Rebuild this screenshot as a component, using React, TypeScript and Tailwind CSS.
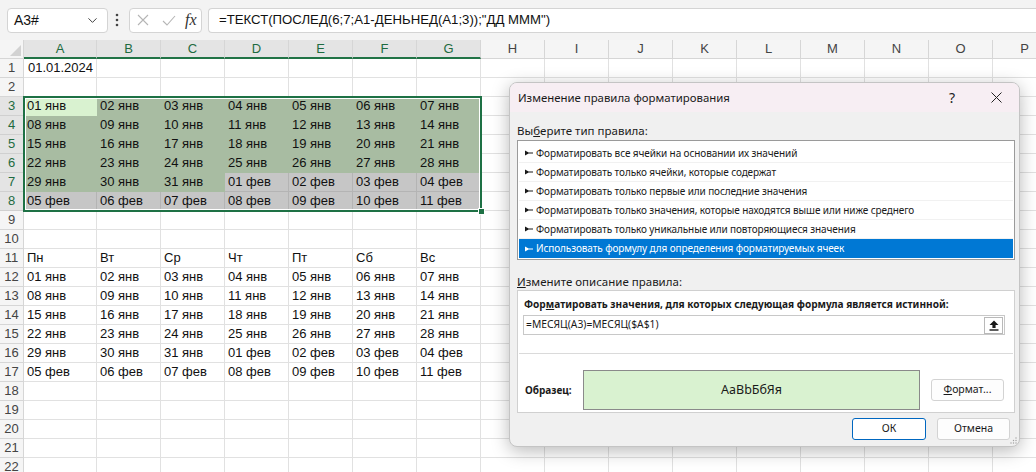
import { ChevronDown } from 'lucide-react';

const COLS = ['A', 'B', 'C', 'D', 'E', 'F', 'G', 'H', 'I', 'J', 'K', 'L', 'M', 'N', 'O', 'P'];
const WEEK = ['Пн', 'Вт', 'Ср', 'Чт', 'Пт', 'Сб', 'Вс'];
const DAYS = Array.from({ length: 42 }, (_, i) =>
    i < 31 ? `${String(i + 1).padStart(2, '0')} янв` : `${String(i - 30).padStart(2, '0')} фев`
);
const ROWS = Array.from({ length: 22 }, (_, i) => i + 1);

const RULES = [
    'Форматировать все ячейки на основании их значений',
    'Форматировать только ячейки, которые содержат',
    'Форматировать только первые или последние значения',
    'Форматировать только значения, которые находятся выше или ниже среднего',
    'Форматировать только уникальные или повторяющиеся значения',
    'Использовать формулу для определения форматируемых ячеек',
];

const cellText = (row: number, col: number) => {
    if (row === 1 && col === 0) return '01.01.2024';
    if (col > 6) return '';
    if (row >= 3 && row <= 8) return DAYS[(row - 3) * 7 + col];
    if (row === 11) return WEEK[col];
    if (row >= 12 && row <= 17) return DAYS[(row - 12) * 7 + col];
    return '';
};

// заливка: условное форматирование + затемнение выделения
const cellTone = (row: number, col: number) => {
    if (row < 3 || row > 8 || col > 6) return 'border-[#e1e1e1] bg-white';
    const i = (row - 3) * 7 + col;
    if (i === 0) return 'border-[#d9f2d0] bg-[#d9f2d0]';
    if (i < 31) return 'border-[#a8bca2] bg-[#a8bca2]';
    return 'border-[#b4b4b4] bg-[#c6c6c6]';
};

function Arrow({ white }: { white?: boolean }) {
    return (
        <svg width="8" height="6" viewBox="0 0 8 6" className="flex-none">
            <path d="M0 0.5 L3.6 2.6 H8 V3.4 H3.6 L0 5.5 Z" fill={white ? '#ffffff' : '#1a1a1a'} />
        </svg>
    );
}

export default function App() {
    return (
        <div className="relative h-[472px] w-[1036px] overflow-hidden bg-white font-['Liberation_Sans',Arial,sans-serif] text-[#111]">
            {/* Строка формул */}
            <div className="flex h-[40px] items-center bg-[#f3f3f3] pl-[7px]">
                <div className="flex h-[25px] w-[101px] flex-none items-center justify-between rounded-[4px] border border-[#d4d4d4] bg-white pl-[6px] pr-[7px] text-[14px]">
                    <span>A3#</span>
                    <ChevronDown size={15} strokeWidth={1.5} className="text-[#333]" />
                </div>
                <svg width="4" height="14" viewBox="0 0 4 14" className="ml-[7px] flex-none">
                    <circle cx="2" cy="2" r="1.3" fill="#444" />
                    <circle cx="2" cy="7" r="1.3" fill="#444" />
                    <circle cx="2" cy="12" r="1.3" fill="#444" />
                </svg>
                <div className="ml-[10px] flex h-[25px] w-[73px] flex-none items-center rounded-[4px] border border-[#d4d4d4] bg-white">
                    <svg width="12" height="12" viewBox="0 0 12 12" className="ml-[7px]">
                        <path d="M1 1 L11 11 M11 1 L1 11" stroke="#b5b5b5" strokeWidth="1.1" />
                    </svg>
                    <svg width="14" height="11" viewBox="0 0 14 11" className="ml-[13px]">
                        <path d="M1 6 L5 10 L13 1" stroke="#b5b5b5" strokeWidth="1.1" fill="none" />
                    </svg>
                    <span className="ml-[9px] font-['Liberation_Serif',serif] text-[16px] italic text-[#333]">fx</span>
                </div>
                <div className="ml-[6px] flex h-[25px] flex-1 items-center rounded-l-[4px] border border-r-0 border-[#d4d4d4] bg-white pl-[10px] text-[13.2px]">
                    =ТЕКСТ(ПОСЛЕД(6;7;A1-ДЕНЬНЕД(A1;3));"ДД МММ")
                </div>
            </div>

            {/* Лист */}
            <div className="relative">
                <div className="flex h-[19px]">
                    <div className="flex w-[24px] flex-none items-end justify-end border-b border-r border-[#d6d6d6] bg-[#f5f5f5] pb-[2px] pr-[2px]">
                        <svg width="11" height="11" viewBox="0 0 11 11">
                            <path d="M11 0 V11 H0 Z" fill="#d2d2d2" />
                        </svg>
                    </div>
                    {COLS.map((c, i) => (
                        <div
                            key={c}
                            className={`flex flex-none items-center justify-center border-r text-[13px] ${i === 0 ? 'w-[73px]' : 'w-[64px]'} ${
                                i < 7
                                    ? 'border-b-2 border-r-[#d6d6d6] border-b-[#217346] bg-[#e4e4e4] text-[#1e6b41]'
                                    : 'border-b border-[#d6d6d6] bg-[#f5f5f5] text-[#444]'
                            }`}
                        >
                            {c}
                        </div>
                    ))}
                </div>
                {ROWS.map(r => {
                    const sel = r >= 3 && r <= 8;
                    return (
                        <div key={r} className="flex h-[19px]">
                            <div
                                className={`flex w-[24px] flex-none items-center justify-center border-b border-r text-[13px] ${
                                    sel ? 'border-b-[#d0d0d0] border-r-[#217346] bg-[#e4e4e4] text-[#1e6b41]' : 'border-[#d6d6d6] bg-[#f5f5f5] text-[#444]'
                                }`}
                            >
                                {r}
                            </div>
                            {COLS.map((c, i) => (
                                <div
                                    key={c}
                                    className={`flex-none overflow-visible whitespace-nowrap border-b border-r text-[13px] leading-[18px] ${
                                        i === 0 ? 'w-[73px]' : 'w-[64px]'
                                    } ${r === 1 && i === 0 ? 'pr-[3px] text-right' : 'pl-[3px]'} ${cellTone(r, i)}`}
                                >
                                    {cellText(r, i)}
                                </div>
                            ))}
                        </div>
                    );
                })}

                {/* Рамка выделения A3:G8 */}
                <div className="absolute left-[23px] top-[56px] h-[116px] w-[459px] border-2 border-[#1e7145] shadow-[inset_0_0_0_1px_#ffffff]">
                    <div className="absolute -bottom-[5px] -right-[5px] h-[7px] w-[7px] border border-white bg-[#1e7145]" />
                </div>
            </div>

            {/* Диалог */}
            <div className="absolute left-[509px] top-[82px] flex h-[365px] w-[511px] flex-col overflow-hidden rounded-[8px] border border-[#c4c4c4] bg-[#f0f0f0] font-['Noto_Sans',sans-serif] text-[#1a1a1a] shadow-[0_4px_18px_rgba(0,0,0,0.28)]">
                <div className="flex h-[29px] flex-none items-center bg-[#f7eef3] pl-[8px]">
                    <span className="text-[11.4px]">Изменение правила форматирования</span>
                    <span className="ml-auto text-[14px] text-[#222]">?</span>
                    <svg width="11" height="11" viewBox="0 0 11 11" className="ml-[36px] mr-[17px]">
                        <path d="M0.5 0.5 L10.5 10.5 M10.5 0.5 L0.5 10.5" stroke="#222" strokeWidth="1" />
                    </svg>
                </div>

                <div className="ml-[7px] mt-[12px] h-[14px] text-[11.5px] leading-[14px]">
                    Вы<span className="underline">б</span>ерите тип правила:
                </div>
                <div className="ml-[7px] mt-[2px] h-[120px] w-[498px] border border-[#9a9a9a] bg-white pt-[3px]">
                    {RULES.map((t, i) => {
                        const active = i === RULES.length - 1;
                        return (
                            <div
                                key={t}
                                className={`mx-[1px] flex h-[19px] items-center gap-[3px] pl-[6px] text-[10px] tracking-[-0.1px] ${
                                    active ? 'bg-[#0078d4] text-white' : 'border-b border-[#f1f1f1]'
                                }`}
                            >
                                <Arrow white={active} />
                                <span>{t}</span>
                            </div>
                        );
                    })}
                </div>

                <div className="ml-[7px] mt-[15px] h-[14px] text-[11.5px] leading-[14px]">
                    <span className="underline">И</span>змените описание правила:
                </div>
                <div className="ml-[7px] mt-[1px] flex h-[123px] w-[498px] flex-col border border-[#d0d0d0] bg-white">
                    <div className="ml-[6px] mt-[6px] h-[15px] text-[10.1px] font-bold leading-[15px]">
                        Фор<span className="underline">м</span>атировать значения, для которых следующая формула является истинной:
                    </div>
                    <div className="ml-[5px] mt-[3px] flex h-[20px] w-[482px] items-center border border-[#c8c8c8] bg-white pl-[2px] text-[10.3px]">
                        <span>=МЕСЯЦ(A3)=МЕСЯЦ($A$1)</span>
                        <div className="ml-auto mr-[1px] flex h-[17px] w-[19px] items-center justify-center border border-[#b9b9b9] bg-white">
                            <svg width="10" height="11" viewBox="0 0 10 11">
                                <path d="M5 0.5 L9.5 5 H6.6 V8 H3.4 V5 H0.5 Z" fill="#1a1a1a" />
                                <rect x="0.5" y="9.3" width="9" height="1.4" fill="#1a1a1a" />
                            </svg>
                        </div>
                    </div>
                    <div className="mx-[1px] mt-[18px] h-px bg-[#dadada]" />
                    <div className="mt-[16px] flex h-[40px] items-center">
                        <span className="ml-[7px] w-[58px] text-[10px] font-bold">Образец:</span>
                        <div className="flex h-[40px] w-[337px] items-center justify-center border border-[#8a8a8a] bg-[#d9f2d0] text-[12.5px]">
                            АаВbБбЯя
                        </div>
                        <div className="ml-[11px] flex h-[22px] w-[73px] items-center justify-center rounded-[3px] border border-[#d3d3d3] bg-[#fdfdfd] text-[10.5px]">
                            <span className="underline">Ф</span>ормат...
                        </div>
                    </div>
                </div>

                <div className="mr-[9px] mt-[5px] flex justify-end gap-[11px]">
                    <div className="flex h-[22px] w-[74px] items-center justify-center rounded-[3px] border border-[#0067c0] bg-white text-[10.5px]">
                        ОК
                    </div>
                    <div className="flex h-[22px] w-[73px] items-center justify-center rounded-[3px] border border-[#d3d3d3] bg-[#fdfdfd] text-[10.5px]">
                        Отмена
                    </div>
                </div>
                <svg width="7" height="7" viewBox="0 0 7 7" className="absolute bottom-[2px] right-[2px]">
                    <circle cx="6" cy="1" r="0.7" fill="#a0a0a0" />
                    <circle cx="6" cy="3.5" r="0.7" fill="#a0a0a0" />
                    <circle cx="3.5" cy="3.5" r="0.7" fill="#a0a0a0" />
                    <circle cx="6" cy="6" r="0.7" fill="#a0a0a0" />
                    <circle cx="3.5" cy="6" r="0.7" fill="#a0a0a0" />
                    <circle cx="1" cy="6" r="0.7" fill="#a0a0a0" />
                </svg>
            </div>
        </div>
    );
}
